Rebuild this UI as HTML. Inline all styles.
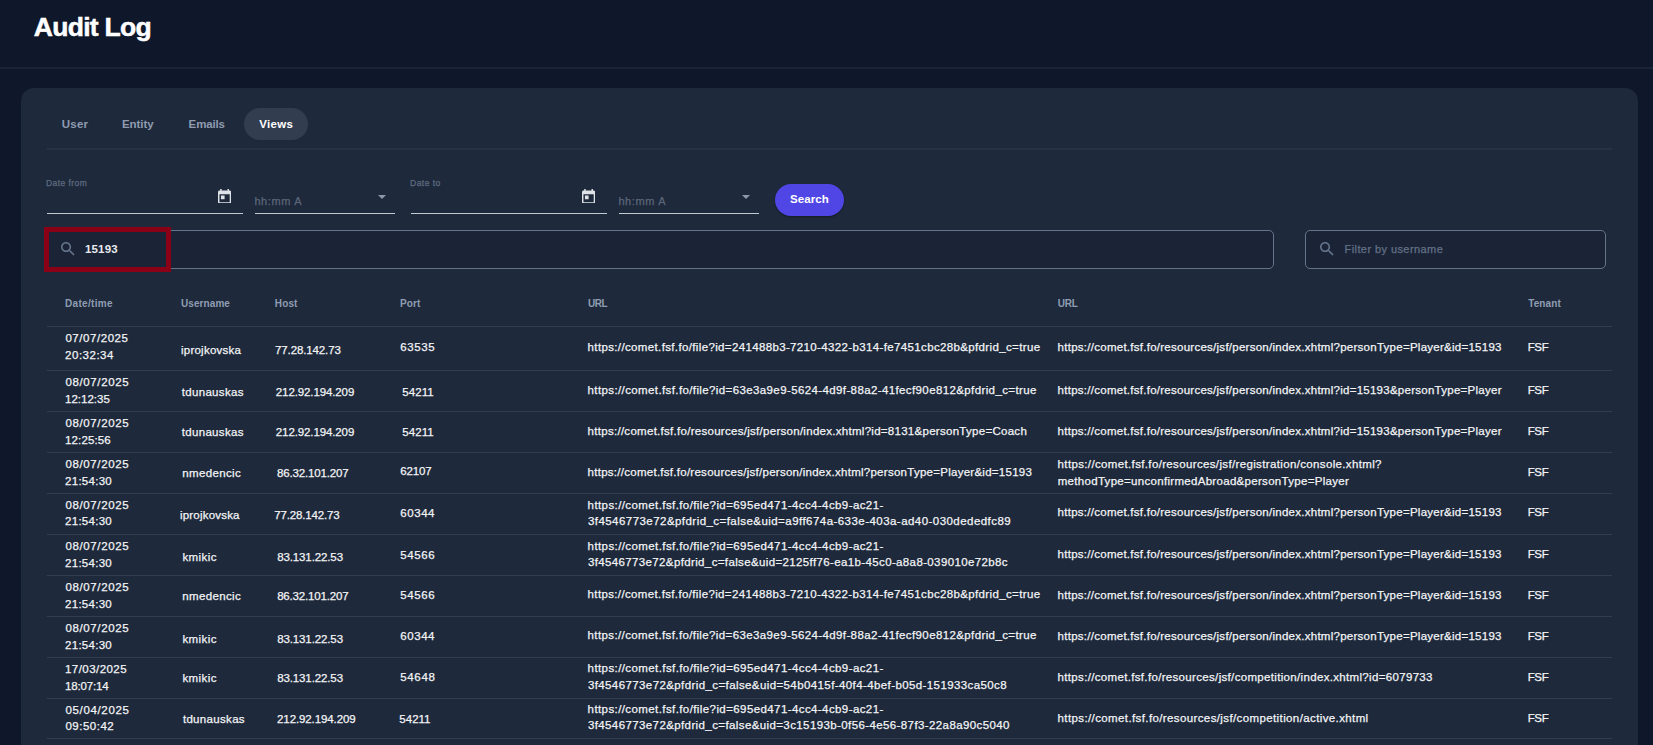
<!DOCTYPE html><html><head><meta charset="utf-8"><style>
*{margin:0;padding:0;box-sizing:border-box}
html,body{width:1653px;height:745px;overflow:hidden;background:#0f172a;font-family:"Liberation Sans",sans-serif}
.b{position:absolute}
#hdrline{left:0;top:67px;width:1653px;height:2px;background:#1a2437}
#card{left:21px;top:88px;width:1617px;height:720px;background:#1e293b;border-radius:13px}
#pill{left:244px;top:108px;width:64px;height:32px;border-radius:16px;background:#333d50}
#tabline{left:47px;top:148px;width:1565px;height:2px;background:#273245}
.uline{top:213px;height:1px;background:#c3c8d0}
.tri{width:0;height:0;border-left:4px solid transparent;border-right:4px solid transparent;border-top:4px solid #8d98aa;top:195px}
#btn{left:775px;top:184px;width:69px;height:32px;border-radius:16px;background:#4f46e5;box-shadow:0 1px 2px rgba(0,0,0,.35)}
.inp{top:230px;height:39px;border:1px solid #64748b;border-radius:5px;background:#1b2436}
#redbox{left:44px;top:227px;width:127px;height:45px;border:5px solid #8a0016}
.rl{left:47px;width:1565px;height:1px;background:#323d4f}

.t{position:absolute;white-space:nowrap;font-family:"Liberation Sans",sans-serif}
</style></head><body>
<div class="b" id="hdrline"></div>
<div class="b" id="card"></div>
<div class="b" id="pill"></div>
<div class="b" id="tabline"></div>
<div class="b uline" style="left:47px;width:196px"></div>
<svg class="b" width="13.2" height="14.67" viewBox="3 1 18 20" style="top:188.6px;left:217.9px"><path fill="#dfe3e8" d="M19 3h-1V1h-2v2H8V1H6v2H5c-1.11 0-1.99.9-1.99 2L3 19c0 1.1.89 2 2 2h14c1.1 0 2-.9 2-2V5c0-1.1-.9-2-2-2zm0 16H5V8h14v11zM7 10h5v5H7z"/></svg>
<div class="b uline" style="left:255px;width:140px"></div>
<div class="b tri" style="left:378px"></div>
<div class="b uline" style="left:411px;width:196px"></div>
<svg class="b" width="13.2" height="14.67" viewBox="3 1 18 20" style="top:188.6px;left:581.9px"><path fill="#dfe3e8" d="M19 3h-1V1h-2v2H8V1H6v2H5c-1.11 0-1.99.9-1.99 2L3 19c0 1.1.89 2 2 2h14c1.1 0 2-.9 2-2V5c0-1.1-.9-2-2-2zm0 16H5V8h14v11zM7 10h5v5H7z"/></svg>
<div class="b uline" style="left:619px;width:140px"></div>
<div class="b tri" style="left:742px"></div>
<div class="b" id="btn"></div>
<div class="b inp" style="left:46px;width:1228px"></div>
<div class="b inp" style="left:1305px;width:301px"></div>
<svg class="b" width="14" height="14" viewBox="3 3 18 18" style="left:61px;top:242px"><path fill="#64748b" d="M15.5 14h-.79l-.28-.27C15.41 12.59 16 11.11 16 9.5 16 5.91 13.09 3 9.5 3S3 5.91 3 9.5 5.91 16 9.5 16c1.61 0 3.09-.59 4.23-1.57l.27.28v.79l5 4.99L20.49 19l-4.99-5zm-6 0C7.01 14 5 11.99 5 9.5S7.01 5 9.5 5 14 7.01 14 9.5 11.99 14 9.5 14z"/></svg>
<svg class="b" width="14" height="14" viewBox="3 3 18 18" style="left:1320px;top:242px"><path fill="#64748b" d="M15.5 14h-.79l-.28-.27C15.41 12.59 16 11.11 16 9.5 16 5.91 13.09 3 9.5 3S3 5.91 3 9.5 5.91 16 9.5 16c1.61 0 3.09-.59 4.23-1.57l.27.28v.79l5 4.99L20.49 19l-4.99-5zm-6 0C7.01 14 5 11.99 5 9.5S7.01 5 9.5 5 14 7.01 14 9.5 11.99 14 9.5 14z"/></svg>
<div class="b" id="redbox"></div>
<div class="b rl" style="top:326px"></div>
<div class="b rl" style="top:370px"></div>
<div class="b rl" style="top:411px"></div>
<div class="b rl" style="top:452px"></div>
<div class="b rl" style="top:493px"></div>
<div class="b rl" style="top:534px"></div>
<div class="b rl" style="top:575px"></div>
<div class="b rl" style="top:616px"></div>
<div class="b rl" style="top:657px"></div>
<div class="b rl" style="top:698px"></div>
<div class="b rl" style="top:738px"></div>
<div class="t" style="left:33.83px;top:8.82px;font-size:26.5px;line-height:37px;color:#ffffff;font-weight:bold;-webkit-text-stroke:0.5px currentColor;letter-spacing:-0.728px">Audit Log</div>
<div class="t" style="left:61.75px;top:116.02px;font-size:11.5px;line-height:16px;color:#8e9bb0;font-weight:bold;letter-spacing:0.223px">User</div>
<div class="t" style="left:121.93px;top:116.02px;font-size:11.5px;line-height:16px;color:#8e9bb0;font-weight:bold;letter-spacing:-0.024px">Entity</div>
<div class="t" style="left:188.60px;top:116.02px;font-size:11.5px;line-height:16px;color:#8e9bb0;font-weight:bold;letter-spacing:-0.135px">Emails</div>
<div class="t" style="left:259.27px;top:116.02px;font-size:11.5px;line-height:16px;color:#ffffff;font-weight:bold;letter-spacing:0.279px">Views</div>
<div class="t" style="left:46.06px;top:177.05px;font-size:8.5px;line-height:12px;color:#5f6b80;-webkit-text-stroke:0.25px currentColor;letter-spacing:0.420px">Date from</div>
<div class="t" style="left:410.06px;top:177.05px;font-size:8.5px;line-height:12px;color:#5f6b80;-webkit-text-stroke:0.25px currentColor;letter-spacing:0.474px">Date to</div>
<div class="t" style="left:254.39px;top:193.69px;font-size:11px;line-height:15px;color:#5c6779;-webkit-text-stroke:0.25px currentColor;letter-spacing:0.617px">hh:mm A</div>
<div class="t" style="left:618.39px;top:193.69px;font-size:11px;line-height:15px;color:#5c6779;-webkit-text-stroke:0.25px currentColor;letter-spacing:0.617px">hh:mm A</div>
<div class="t" style="left:790.00px;top:191.12px;font-size:11.5px;line-height:16px;color:#ffffff;font-weight:bold;letter-spacing:0.105px">Search</div>
<div class="t" style="left:85.01px;top:241.22px;font-size:11.5px;line-height:16px;color:#e8eaee;font-weight:bold;letter-spacing:0.165px">15193</div>
<div class="t" style="left:1344.53px;top:241.89px;font-size:11px;line-height:15px;color:#627086;-webkit-text-stroke:0.25px currentColor;letter-spacing:0.420px">Filter by username</div>
<div class="t" style="left:65.06px;top:296.54px;font-size:10px;line-height:14px;color:#8f9db2;font-weight:bold;letter-spacing:0.310px">Date/time</div>
<div class="t" style="left:181.05px;top:296.54px;font-size:10px;line-height:14px;color:#8f9db2;font-weight:bold;letter-spacing:0.071px">Username</div>
<div class="t" style="left:274.81px;top:296.54px;font-size:10px;line-height:14px;color:#8f9db2;font-weight:bold;letter-spacing:0.125px">Host</div>
<div class="t" style="left:400.06px;top:296.54px;font-size:10px;line-height:14px;color:#8f9db2;font-weight:bold;letter-spacing:0.094px">Port</div>
<div class="t" style="left:587.95px;top:296.54px;font-size:10px;line-height:14px;color:#8f9db2;font-weight:bold;letter-spacing:-0.476px">URL</div>
<div class="t" style="left:1057.74px;top:296.54px;font-size:10px;line-height:14px;color:#8f9db2;font-weight:bold;letter-spacing:-0.238px">URL</div>
<div class="t" style="left:1528.19px;top:296.54px;font-size:10px;line-height:14px;color:#8f9db2;font-weight:bold;letter-spacing:0.107px">Tenant</div>
<div class="t" style="left:65.41px;top:330.32px;font-size:11.5px;line-height:16px;color:#f3f4f6;-webkit-text-stroke:0.25px currentColor;letter-spacing:0.550px">07/07/2025</div>
<div class="t" style="left:65.07px;top:347.02px;font-size:11.5px;line-height:16px;color:#f3f4f6;-webkit-text-stroke:0.25px currentColor;letter-spacing:0.512px">20:32:34</div>
<div class="t" style="left:180.94px;top:342.22px;font-size:11.5px;line-height:16px;color:#f3f4f6;-webkit-text-stroke:0.25px currentColor;letter-spacing:0.251px">iprojkovska</div>
<div class="t" style="left:275.02px;top:342.22px;font-size:11.5px;line-height:16px;color:#f3f4f6;-webkit-text-stroke:0.25px currentColor;letter-spacing:-0.119px">77.28.142.73</div>
<div class="t" style="left:400.23px;top:338.82px;font-size:11.5px;line-height:16px;color:#f3f4f6;-webkit-text-stroke:0.25px currentColor;letter-spacing:0.630px">63535</div>
<div class="t" style="left:587.60px;top:338.82px;font-size:11.5px;line-height:16px;color:#f3f4f6;-webkit-text-stroke:0.25px currentColor;letter-spacing:0.358px">https://comet.fsf.fo/file?id=241488b3-7210-4322-b314-fe7451cbc28b&amp;pfdrid_c=true</div>
<div class="t" style="left:1057.60px;top:338.82px;font-size:11.5px;line-height:16px;color:#f3f4f6;-webkit-text-stroke:0.25px currentColor;letter-spacing:0.262px">https://comet.fsf.fo/resources/jsf/person/index.xhtml?personType=Player&amp;id=15193</div>
<div class="t" style="left:1527.65px;top:338.82px;font-size:11.5px;line-height:16px;color:#f3f4f6;-webkit-text-stroke:0.25px currentColor;letter-spacing:-0.298px">FSF</div>
<div class="t" style="left:65.41px;top:374.02px;font-size:11.5px;line-height:16px;color:#f3f4f6;-webkit-text-stroke:0.25px currentColor;letter-spacing:0.626px">08/07/2025</div>
<div class="t" style="left:64.98px;top:390.62px;font-size:11.5px;line-height:16px;color:#f3f4f6;-webkit-text-stroke:0.25px currentColor;letter-spacing:0.020px">12:12:35</div>
<div class="t" style="left:181.72px;top:383.92px;font-size:11.5px;line-height:16px;color:#f3f4f6;-webkit-text-stroke:0.25px currentColor;letter-spacing:0.325px">tdunauskas</div>
<div class="t" style="left:275.85px;top:383.92px;font-size:11.5px;line-height:16px;color:#f3f4f6;-webkit-text-stroke:0.25px currentColor;letter-spacing:-0.116px">212.92.194.209</div>
<div class="t" style="left:402.21px;top:383.92px;font-size:11.5px;line-height:16px;color:#f3f4f6;-webkit-text-stroke:0.25px currentColor;letter-spacing:0.107px">54211</div>
<div class="t" style="left:587.60px;top:381.72px;font-size:11.5px;line-height:16px;color:#f3f4f6;-webkit-text-stroke:0.25px currentColor;letter-spacing:0.385px">https://comet.fsf.fo/file?id=63e3a9e9-5624-4d9f-88a2-41fecf90e812&amp;pfdrid_c=true</div>
<div class="t" style="left:1057.60px;top:381.72px;font-size:11.5px;line-height:16px;color:#f3f4f6;-webkit-text-stroke:0.25px currentColor;letter-spacing:0.262px">https://comet.fsf.fo/resources/jsf/person/index.xhtml?id=15193&amp;personType=Player</div>
<div class="t" style="left:1527.65px;top:381.72px;font-size:11.5px;line-height:16px;color:#f3f4f6;-webkit-text-stroke:0.25px currentColor;letter-spacing:-0.298px">FSF</div>
<div class="t" style="left:65.41px;top:414.82px;font-size:11.5px;line-height:16px;color:#f3f4f6;-webkit-text-stroke:0.25px currentColor;letter-spacing:0.626px">08/07/2025</div>
<div class="t" style="left:64.98px;top:431.52px;font-size:11.5px;line-height:16px;color:#f3f4f6;-webkit-text-stroke:0.25px currentColor;letter-spacing:0.144px">12:25:56</div>
<div class="t" style="left:181.72px;top:423.92px;font-size:11.5px;line-height:16px;color:#f3f4f6;-webkit-text-stroke:0.25px currentColor;letter-spacing:0.325px">tdunauskas</div>
<div class="t" style="left:275.85px;top:423.92px;font-size:11.5px;line-height:16px;color:#f3f4f6;-webkit-text-stroke:0.25px currentColor;letter-spacing:-0.116px">212.92.194.209</div>
<div class="t" style="left:402.21px;top:423.92px;font-size:11.5px;line-height:16px;color:#f3f4f6;-webkit-text-stroke:0.25px currentColor;letter-spacing:0.107px">54211</div>
<div class="t" style="left:587.60px;top:422.62px;font-size:11.5px;line-height:16px;color:#f3f4f6;-webkit-text-stroke:0.25px currentColor;letter-spacing:0.283px">https://comet.fsf.fo/resources/jsf/person/index.xhtml?id=8131&amp;personType=Coach</div>
<div class="t" style="left:1057.60px;top:422.62px;font-size:11.5px;line-height:16px;color:#f3f4f6;-webkit-text-stroke:0.25px currentColor;letter-spacing:0.262px">https://comet.fsf.fo/resources/jsf/person/index.xhtml?id=15193&amp;personType=Player</div>
<div class="t" style="left:1527.65px;top:422.62px;font-size:11.5px;line-height:16px;color:#f3f4f6;-webkit-text-stroke:0.25px currentColor;letter-spacing:-0.298px">FSF</div>
<div class="t" style="left:65.41px;top:455.72px;font-size:11.5px;line-height:16px;color:#f3f4f6;-webkit-text-stroke:0.25px currentColor;letter-spacing:0.626px">08/07/2025</div>
<div class="t" style="left:65.07px;top:472.62px;font-size:11.5px;line-height:16px;color:#f3f4f6;-webkit-text-stroke:0.25px currentColor;letter-spacing:0.273px">21:54:30</div>
<div class="t" style="left:182.16px;top:464.72px;font-size:11.5px;line-height:16px;color:#f3f4f6;-webkit-text-stroke:0.25px currentColor;letter-spacing:0.379px">nmedencic</div>
<div class="t" style="left:277.05px;top:464.72px;font-size:11.5px;line-height:16px;color:#f3f4f6;-webkit-text-stroke:0.25px currentColor;letter-spacing:-0.169px">86.32.101.207</div>
<div class="t" style="left:400.23px;top:463.32px;font-size:11.5px;line-height:16px;color:#f3f4f6;-webkit-text-stroke:0.25px currentColor;letter-spacing:-0.107px">62107</div>
<div class="t" style="left:587.60px;top:463.52px;font-size:11.5px;line-height:16px;color:#f3f4f6;-webkit-text-stroke:0.25px currentColor;letter-spacing:0.267px">https://comet.fsf.fo/resources/jsf/person/index.xhtml?personType=Player&amp;id=15193</div>
<div class="t" style="left:1057.60px;top:455.92px;font-size:11.5px;line-height:16px;color:#f3f4f6;-webkit-text-stroke:0.25px currentColor;letter-spacing:0.354px">https://comet.fsf.fo/resources/jsf/registration/console.xhtml?</div>
<div class="t" style="left:1057.74px;top:472.82px;font-size:11.5px;line-height:16px;color:#f3f4f6;-webkit-text-stroke:0.25px currentColor;letter-spacing:0.303px">methodType=unconfirmedAbroad&amp;personType=Player</div>
<div class="t" style="left:1527.65px;top:463.52px;font-size:11.5px;line-height:16px;color:#f3f4f6;-webkit-text-stroke:0.25px currentColor;letter-spacing:-0.298px">FSF</div>
<div class="t" style="left:65.41px;top:496.52px;font-size:11.5px;line-height:16px;color:#f3f4f6;-webkit-text-stroke:0.25px currentColor;letter-spacing:0.626px">08/07/2025</div>
<div class="t" style="left:65.07px;top:513.42px;font-size:11.5px;line-height:16px;color:#f3f4f6;-webkit-text-stroke:0.25px currentColor;letter-spacing:0.273px">21:54:30</div>
<div class="t" style="left:180.01px;top:507.02px;font-size:11.5px;line-height:16px;color:#f3f4f6;-webkit-text-stroke:0.25px currentColor;letter-spacing:0.196px">iprojkovska</div>
<div class="t" style="left:274.14px;top:507.02px;font-size:11.5px;line-height:16px;color:#f3f4f6;-webkit-text-stroke:0.25px currentColor;letter-spacing:-0.142px">77.28.142.73</div>
<div class="t" style="left:400.23px;top:505.02px;font-size:11.5px;line-height:16px;color:#f3f4f6;-webkit-text-stroke:0.25px currentColor;letter-spacing:0.578px">60344</div>
<div class="t" style="left:587.60px;top:496.52px;font-size:11.5px;line-height:16px;color:#f3f4f6;-webkit-text-stroke:0.25px currentColor;letter-spacing:0.406px">https://comet.fsf.fo/file?id=695ed471-4cc4-4cb9-ac21-</div>
<div class="t" style="left:587.90px;top:513.42px;font-size:11.5px;line-height:16px;color:#f3f4f6;-webkit-text-stroke:0.25px currentColor;letter-spacing:0.454px">3f4546773e72&amp;pfdrid_c=false&amp;uid=a9ff674a-633e-403a-ad40-030dededfc89</div>
<div class="t" style="left:1057.60px;top:504.42px;font-size:11.5px;line-height:16px;color:#f3f4f6;-webkit-text-stroke:0.25px currentColor;letter-spacing:0.262px">https://comet.fsf.fo/resources/jsf/person/index.xhtml?personType=Player&amp;id=15193</div>
<div class="t" style="left:1527.65px;top:504.42px;font-size:11.5px;line-height:16px;color:#f3f4f6;-webkit-text-stroke:0.25px currentColor;letter-spacing:-0.298px">FSF</div>
<div class="t" style="left:65.41px;top:538.32px;font-size:11.5px;line-height:16px;color:#f3f4f6;-webkit-text-stroke:0.25px currentColor;letter-spacing:0.626px">08/07/2025</div>
<div class="t" style="left:65.07px;top:555.02px;font-size:11.5px;line-height:16px;color:#f3f4f6;-webkit-text-stroke:0.25px currentColor;letter-spacing:0.273px">21:54:30</div>
<div class="t" style="left:182.41px;top:549.32px;font-size:11.5px;line-height:16px;color:#f3f4f6;-webkit-text-stroke:0.25px currentColor;letter-spacing:0.436px">kmikic</div>
<div class="t" style="left:277.15px;top:549.32px;font-size:11.5px;line-height:16px;color:#f3f4f6;-webkit-text-stroke:0.25px currentColor;letter-spacing:-0.113px">83.131.22.53</div>
<div class="t" style="left:400.22px;top:546.52px;font-size:11.5px;line-height:16px;color:#f3f4f6;-webkit-text-stroke:0.25px currentColor;letter-spacing:0.631px">54566</div>
<div class="t" style="left:587.60px;top:537.52px;font-size:11.5px;line-height:16px;color:#f3f4f6;-webkit-text-stroke:0.25px currentColor;letter-spacing:0.406px">https://comet.fsf.fo/file?id=695ed471-4cc4-4cb9-ac21-</div>
<div class="t" style="left:587.90px;top:554.42px;font-size:11.5px;line-height:16px;color:#f3f4f6;-webkit-text-stroke:0.25px currentColor;letter-spacing:0.368px">3f4546773e72&amp;pfdrid_c=false&amp;uid=2125ff76-ea1b-45c0-a8a8-039010e72b8c</div>
<div class="t" style="left:1057.60px;top:546.02px;font-size:11.5px;line-height:16px;color:#f3f4f6;-webkit-text-stroke:0.25px currentColor;letter-spacing:0.262px">https://comet.fsf.fo/resources/jsf/person/index.xhtml?personType=Player&amp;id=15193</div>
<div class="t" style="left:1527.65px;top:546.02px;font-size:11.5px;line-height:16px;color:#f3f4f6;-webkit-text-stroke:0.25px currentColor;letter-spacing:-0.298px">FSF</div>
<div class="t" style="left:65.41px;top:579.22px;font-size:11.5px;line-height:16px;color:#f3f4f6;-webkit-text-stroke:0.25px currentColor;letter-spacing:0.626px">08/07/2025</div>
<div class="t" style="left:65.07px;top:595.82px;font-size:11.5px;line-height:16px;color:#f3f4f6;-webkit-text-stroke:0.25px currentColor;letter-spacing:0.273px">21:54:30</div>
<div class="t" style="left:182.16px;top:588.22px;font-size:11.5px;line-height:16px;color:#f3f4f6;-webkit-text-stroke:0.25px currentColor;letter-spacing:0.379px">nmedencic</div>
<div class="t" style="left:277.15px;top:588.22px;font-size:11.5px;line-height:16px;color:#f3f4f6;-webkit-text-stroke:0.25px currentColor;letter-spacing:-0.169px">86.32.101.207</div>
<div class="t" style="left:400.22px;top:586.82px;font-size:11.5px;line-height:16px;color:#f3f4f6;-webkit-text-stroke:0.25px currentColor;letter-spacing:0.631px">54566</div>
<div class="t" style="left:587.60px;top:586.32px;font-size:11.5px;line-height:16px;color:#f3f4f6;-webkit-text-stroke:0.25px currentColor;letter-spacing:0.358px">https://comet.fsf.fo/file?id=241488b3-7210-4322-b314-fe7451cbc28b&amp;pfdrid_c=true</div>
<div class="t" style="left:1057.60px;top:586.92px;font-size:11.5px;line-height:16px;color:#f3f4f6;-webkit-text-stroke:0.25px currentColor;letter-spacing:0.262px">https://comet.fsf.fo/resources/jsf/person/index.xhtml?personType=Player&amp;id=15193</div>
<div class="t" style="left:1527.65px;top:586.92px;font-size:11.5px;line-height:16px;color:#f3f4f6;-webkit-text-stroke:0.25px currentColor;letter-spacing:-0.298px">FSF</div>
<div class="t" style="left:65.41px;top:620.02px;font-size:11.5px;line-height:16px;color:#f3f4f6;-webkit-text-stroke:0.25px currentColor;letter-spacing:0.626px">08/07/2025</div>
<div class="t" style="left:65.07px;top:636.62px;font-size:11.5px;line-height:16px;color:#f3f4f6;-webkit-text-stroke:0.25px currentColor;letter-spacing:0.273px">21:54:30</div>
<div class="t" style="left:182.41px;top:630.52px;font-size:11.5px;line-height:16px;color:#f3f4f6;-webkit-text-stroke:0.25px currentColor;letter-spacing:0.436px">kmikic</div>
<div class="t" style="left:277.15px;top:630.52px;font-size:11.5px;line-height:16px;color:#f3f4f6;-webkit-text-stroke:0.25px currentColor;letter-spacing:-0.113px">83.131.22.53</div>
<div class="t" style="left:400.23px;top:627.62px;font-size:11.5px;line-height:16px;color:#f3f4f6;-webkit-text-stroke:0.25px currentColor;letter-spacing:0.578px">60344</div>
<div class="t" style="left:587.60px;top:627.22px;font-size:11.5px;line-height:16px;color:#f3f4f6;-webkit-text-stroke:0.25px currentColor;letter-spacing:0.385px">https://comet.fsf.fo/file?id=63e3a9e9-5624-4d9f-88a2-41fecf90e812&amp;pfdrid_c=true</div>
<div class="t" style="left:1057.60px;top:627.82px;font-size:11.5px;line-height:16px;color:#f3f4f6;-webkit-text-stroke:0.25px currentColor;letter-spacing:0.262px">https://comet.fsf.fo/resources/jsf/person/index.xhtml?personType=Player&amp;id=15193</div>
<div class="t" style="left:1527.65px;top:627.82px;font-size:11.5px;line-height:16px;color:#f3f4f6;-webkit-text-stroke:0.25px currentColor;letter-spacing:-0.298px">FSF</div>
<div class="t" style="left:64.98px;top:660.92px;font-size:11.5px;line-height:16px;color:#f3f4f6;-webkit-text-stroke:0.25px currentColor;letter-spacing:0.451px">17/03/2025</div>
<div class="t" style="left:64.98px;top:677.52px;font-size:11.5px;line-height:16px;color:#f3f4f6;-webkit-text-stroke:0.25px currentColor;letter-spacing:-0.171px">18:07:14</div>
<div class="t" style="left:182.41px;top:669.92px;font-size:11.5px;line-height:16px;color:#f3f4f6;-webkit-text-stroke:0.25px currentColor;letter-spacing:0.436px">kmikic</div>
<div class="t" style="left:277.15px;top:669.92px;font-size:11.5px;line-height:16px;color:#f3f4f6;-webkit-text-stroke:0.25px currentColor;letter-spacing:-0.113px">83.131.22.53</div>
<div class="t" style="left:400.22px;top:668.52px;font-size:11.5px;line-height:16px;color:#f3f4f6;-webkit-text-stroke:0.25px currentColor;letter-spacing:0.663px">54648</div>
<div class="t" style="left:587.60px;top:660.22px;font-size:11.5px;line-height:16px;color:#f3f4f6;-webkit-text-stroke:0.25px currentColor;letter-spacing:0.406px">https://comet.fsf.fo/file?id=695ed471-4cc4-4cb9-ac21-</div>
<div class="t" style="left:587.90px;top:677.12px;font-size:11.5px;line-height:16px;color:#f3f4f6;-webkit-text-stroke:0.25px currentColor;letter-spacing:0.400px">3f4546773e72&amp;pfdrid_c=false&amp;uid=54b0415f-40f4-4bef-b05d-151933ca50c8</div>
<div class="t" style="left:1057.60px;top:668.62px;font-size:11.5px;line-height:16px;color:#f3f4f6;-webkit-text-stroke:0.25px currentColor;letter-spacing:0.329px">https://comet.fsf.fo/resources/jsf/competition/index.xhtml?id=6079733</div>
<div class="t" style="left:1527.65px;top:668.62px;font-size:11.5px;line-height:16px;color:#f3f4f6;-webkit-text-stroke:0.25px currentColor;letter-spacing:-0.298px">FSF</div>
<div class="t" style="left:65.41px;top:701.72px;font-size:11.5px;line-height:16px;color:#f3f4f6;-webkit-text-stroke:0.25px currentColor;letter-spacing:0.663px">05/04/2025</div>
<div class="t" style="left:65.41px;top:717.82px;font-size:11.5px;line-height:16px;color:#f3f4f6;-webkit-text-stroke:0.25px currentColor;letter-spacing:0.505px">09:50:42</div>
<div class="t" style="left:182.88px;top:710.72px;font-size:11.5px;line-height:16px;color:#f3f4f6;-webkit-text-stroke:0.25px currentColor;letter-spacing:0.325px">tdunauskas</div>
<div class="t" style="left:277.07px;top:710.72px;font-size:11.5px;line-height:16px;color:#f3f4f6;-webkit-text-stroke:0.25px currentColor;letter-spacing:-0.103px">212.92.194.209</div>
<div class="t" style="left:399.34px;top:710.72px;font-size:11.5px;line-height:16px;color:#f3f4f6;-webkit-text-stroke:0.25px currentColor;letter-spacing:0.006px">54211</div>
<div class="t" style="left:587.60px;top:701.12px;font-size:11.5px;line-height:16px;color:#f3f4f6;-webkit-text-stroke:0.25px currentColor;letter-spacing:0.406px">https://comet.fsf.fo/file?id=695ed471-4cc4-4cb9-ac21-</div>
<div class="t" style="left:587.90px;top:717.22px;font-size:11.5px;line-height:16px;color:#f3f4f6;-webkit-text-stroke:0.25px currentColor;letter-spacing:0.394px">3f4546773e72&amp;pfdrid_c=false&amp;uid=3c15193b-0f56-4e56-87f3-22a8a90c5040</div>
<div class="t" style="left:1057.60px;top:709.52px;font-size:11.5px;line-height:16px;color:#f3f4f6;-webkit-text-stroke:0.25px currentColor;letter-spacing:0.385px">https://comet.fsf.fo/resources/jsf/competition/active.xhtml</div>
<div class="t" style="left:1527.65px;top:709.52px;font-size:11.5px;line-height:16px;color:#f3f4f6;-webkit-text-stroke:0.25px currentColor;letter-spacing:-0.298px">FSF</div>
</body></html>
